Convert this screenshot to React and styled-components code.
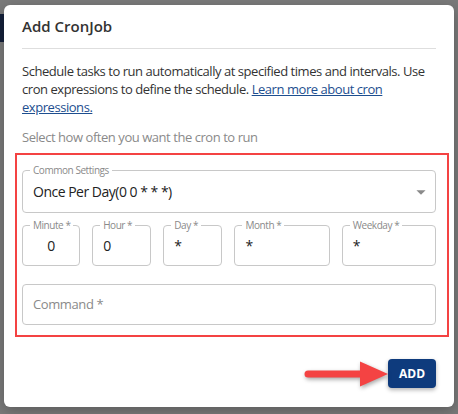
import React from 'react';
import styled, { createGlobalStyle } from 'styled-components';

const GlobalStyle = createGlobalStyle`
  html, body {
    margin: 0;
    padding: 0;
    background: #7a7a7a;
  }
  * {
    box-sizing: border-box;
  }
`;

const Backdrop = styled.div`
  width: 458px;
  height: 414px;
  padding: 5px 4px 7px 4px;
  background:
    linear-gradient(#14203a, #14203a) 0 14px / 4px 28px no-repeat,
    #7a7a7a;
  font-family: "Open Sans", "Noto Sans", sans-serif;
`;

const Modal = styled.div`
  height: 402px;
  background: #fff;
  border-radius: 6px;
  padding: 0 18px;
  display: flex;
  flex-direction: column;
  box-shadow: 0 4px 14px rgba(0, 0, 0, 0.25);
`;

const Header = styled.h2`
  margin: 0;
  padding: 9px 0 10px;
  font-size: 15px;
  line-height: 24px;
  font-weight: 600;
  color: #333;
  border-bottom: 1px solid #dedede;
`;

const Description = styled.p`
  margin: 13px 0 0;
  font-size: 13px;
  line-height: 18px;
  letter-spacing: -0.45px;
  color: #333;
`;

const DocLink = styled.a`
  color: #1d4e8f;
  text-decoration: underline;
`;

const Hint = styled.div`
  margin-top: 12px;
  font-size: 13px;
  line-height: 18px;
  letter-spacing: -0.45px;
  color: #8a8a8a;
`;

const Highlight = styled.div`
  margin: 7px -13px 0 -7px;
  padding: 9px 11px 10px 5px;
  border: 2px solid #f44343;
  display: flex;
  flex-direction: column;
`;

const Field = styled.fieldset`
  margin: 0;
  padding: 0 10px;
  min-width: 0;
  border: 1px solid #c8c8c8;
  border-radius: 4px;
`;

const Legend = styled.legend`
  margin-left: -3px;
  padding: 0 3px;
  font-size: 10px;
  line-height: 12px;
  letter-spacing: -0.45px;
  color: #8a8a8a;
  white-space: nowrap;
`;

const Value = styled.div`
  display: flex;
  align-items: center;
  justify-content: ${(p) => (p.$center ? 'center' : 'flex-start')};
  padding: 5px 0 9px;
  font-size: 14px;
  line-height: 20px;
  letter-spacing: -0.5px;
  color: #222;
`;

const SelectRow = styled.div`
  display: flex;
  align-items: center;
  padding: 5px 0 9px;
  font-size: 14px;
  line-height: 20px;
  letter-spacing: -0.5px;
  color: #222;
`;

const SelectText = styled.span`
  flex: 1;
`;

const Caret = styled.svg`
  display: block;
  margin-right: -7px;
`;

const TimeRow = styled.div`
  display: grid;
  grid-template-columns: 58fr 59fr 59fr 95fr 94fr;
  column-gap: 12px;
  margin-top: 6px;
`;

const CommandBox = styled.div`
  margin-top: 18px;
  padding: 9px 10px 10px;
  border: 1px solid #c8c8c8;
  border-radius: 4px;
  font-size: 13px;
  line-height: 20px;
  letter-spacing: -0.4px;
  color: #8a8a8a;
`;

const Footer = styled.div`
  margin-top: 22px;
  display: flex;
  justify-content: flex-end;
  align-items: center;
`;

const Pointer = styled.svg`
  display: block;
  filter: drop-shadow(1px 2px 2px rgba(0, 0, 0, 0.35));
`;

const AddButton = styled.button`
  width: 48px;
  height: 29px;
  border: none;
  border-radius: 4px;
  background: #0e3b7d;
  color: #fff;
  font-family: "Open Sans", "Noto Sans", sans-serif;
  font-size: 12px;
  font-weight: 700;
  box-shadow: 0 2px 4px rgba(0, 0, 0, 0.3);
  cursor: pointer;
`;

const timeFields = [
  { label: 'Minute', value: '0', center: true },
  { label: 'Hour', value: '0' },
  { label: 'Day', value: '*' },
  { label: 'Month', value: '*' },
  { label: 'Weekday', value: '*' },
];

const App = () => {
  return (
    <>
      <GlobalStyle />
      <Backdrop>
        <Modal>
          <Header>Add CronJob</Header>
          <Description>
            Schedule tasks to run automatically at specified times and intervals. Use
            cron expressions to define the schedule.{' '}
            <DocLink href="#">Learn more about cron expressions.</DocLink>
          </Description>
          <Hint>Select how often you want the cron to run</Hint>

          <Highlight>
            <Field>
              <Legend>Common Settings</Legend>
              <SelectRow>
                <SelectText>Once Per Day(0 0 * * *)</SelectText>
                <Caret width="22" height="22" viewBox="0 0 24 24">
                  <path d="M7 10l5 5 5-5z" fill="#8a8a8a" />
                </Caret>
              </SelectRow>
            </Field>

            <TimeRow>
              {timeFields.map((f) => (
                <Field key={f.label}>
                  <Legend>{f.label} *</Legend>
                  <Value $center={f.center}>{f.value}</Value>
                </Field>
              ))}
            </TimeRow>

            <CommandBox>Command *</CommandBox>
          </Highlight>

          <Footer>
            <Pointer width="84" height="28" viewBox="0 0 84 28">
              <line x1="4" y1="14" x2="60" y2="14" stroke="#f44343" strokeWidth="7" strokeLinecap="round" />
              <polygon points="56,1.5 84,14 56,26.5" fill="#f44343" />
            </Pointer>
            <AddButton>ADD</AddButton>
          </Footer>
        </Modal>
      </Backdrop>
    </>
  );
};

export default App;
